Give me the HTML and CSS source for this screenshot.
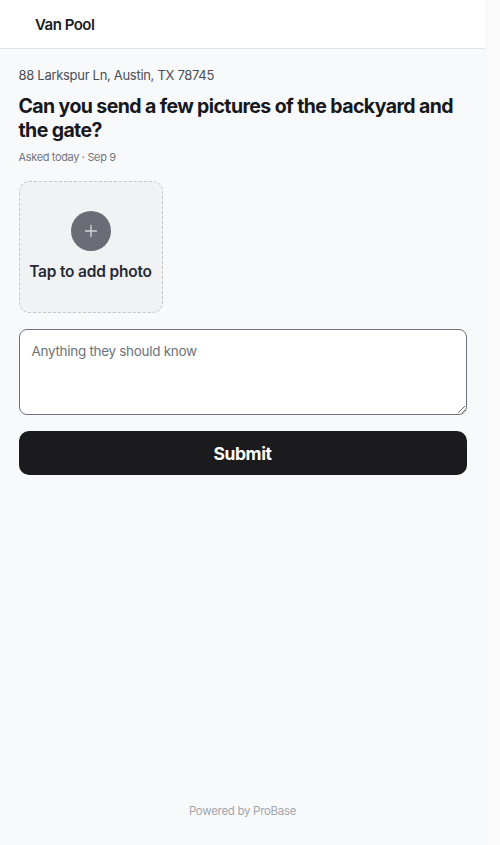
FILE: index.html
```html
<!DOCTYPE html>
<html lang="en">
<head>
<meta charset="utf-8">
<title>Van Pool</title>
<link rel="stylesheet" href="styles.css">
</head>
<body>
<div class="page">
  <header class="topbar">
    <span class="brand">Van Pool</span>
  </header>
  <main class="content">
    <p class="address">88 Larkspur Ln, Austin, TX 78745</p>
    <h1 class="question">Can you send a few pictures of the backyard and the gate?</h1>
    <p class="meta">Asked today · Sep 9</p>
    <button class="upload" type="button">
      <span class="plus">
        <svg width="14" height="14" viewBox="0 0 14 14"><path d="M7 1.5v11M1.5 7h11" stroke="#d4d5da" stroke-width="1.4" stroke-linecap="round"/></svg>
      </span>
      <span class="upload-label">Tap to add photo</span>
    </button>
    <textarea class="note" placeholder="Anything they should know"></textarea>
    <button class="submit" type="button">Submit</button>
  </main>
  <footer class="footer">Powered by ProBase</footer>
</div>
</body>
</html>
```
FILE: styles.css
```css
* { box-sizing: border-box; }
html, body { margin: 0; padding: 0; }
html { background: #fafafa; }
body {
  font-family: "Inter", "DejaVu Sans", sans-serif;
  color: #1b1d22;
}
.page {
  width: calc(100% - 15px);
  min-height: 100vh;
  background: #f8f9fb;
  display: flex;
  flex-direction: column;
}
.topbar {
  height: 49px;
  background: #ffffff;
  border-bottom: 1px solid #dfe3e7;
  display: flex;
  align-items: center;
  padding-left: 35px;
}
.brand {
  font-size: 15px;
  font-weight: 600;
  letter-spacing: -0.5px;
  color: #1b1d22;
}
.content {
  width: 448px;
  margin: 0 auto;
  padding-top: 17px;
  display: flex;
  flex-direction: column;
  align-items: flex-start;
}
.address {
  margin: 0;
  font-size: 13px;
  line-height: 18px;
  letter-spacing: -0.3px;
  color: #4a4f58;
}
.question {
  margin: 10px 0 0;
  font-size: 19.5px;
  line-height: 24px;
  font-weight: 700;
  letter-spacing: -0.6px;
  color: #16181d;
}
.meta {
  margin: 7px 0 0;
  font-size: 11px;
  line-height: 16px;
  letter-spacing: -0.35px;
  color: #72767e;
}
.upload {
  margin-top: 16px;
  width: 144px;
  height: 132px;
  border: 1px dashed #c3c7cc;
  border-radius: 10px;
  background: #f0f2f4;
  display: flex;
  flex-direction: column;
  align-items: center;
  padding: 29px 0 0;
  font-family: inherit;
}
.plus {
  width: 40px;
  height: 40px;
  border-radius: 50%;
  background: #6c6c77;
  display: flex;
  align-items: center;
  justify-content: center;
}
.upload-label {
  margin-top: 11px;
  font-size: 15.5px;
  font-weight: 600;
  letter-spacing: -0.2px;
  color: #272b35;
}
.note {
  margin-top: 16px;
  width: 448px;
  height: 86px;
  border: 1px solid #6b7079;
  border-radius: 8px;
  background: #ffffff;
  padding: 13px 12px;
  font-family: inherit;
  font-size: 13.5px;
  letter-spacing: -0.3px;
  color: #1b1d22;
}
.note::placeholder { color: #6d727b; }
.submit {
  margin-top: 16px;
  width: 448px;
  height: 44px;
  border: none;
  border-radius: 10px;
  background: #1b1b1d;
  color: #ffffff;
  font-family: inherit;
  font-size: 17.5px;
  font-weight: 700;
  letter-spacing: -0.4px;
}
.footer {
  margin-top: auto;
  padding: 0 0 26px;
  text-align: center;
  font-size: 11.5px;
  line-height: 16px;
  letter-spacing: -0.3px;
  color: #a2a6ad;
}
```
